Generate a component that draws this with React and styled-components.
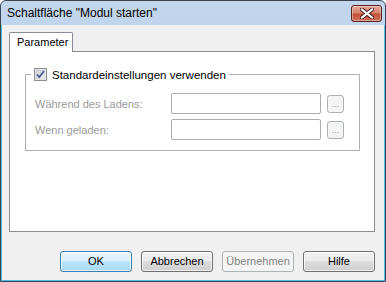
import styled, { createGlobalStyle } from 'styled-components';

const Global = createGlobalStyle`
  html, body { margin: 0; padding: 0; background: #ffffff; }
  * { box-sizing: border-box; }
`;

const Window = styled.div`
  width: 386px;
  height: 282px;
  display: flex;
  flex-direction: column;
  border: 1px solid #3a4654;
  border-radius: 6px 6px 0 0;
  background: linear-gradient(#c2d6ec, #b9d0ea 40%, #c5d9ee);
  font-family: "Liberation Sans", Arial, sans-serif;
  overflow: hidden;
`;

const TitleBar = styled.div`
  height: 24px;
  display: flex;
  align-items: flex-start;
  justify-content: space-between;
  padding: 0 3px 0 6px;
`;

const Title = styled.div`
  font-size: 12px;
  line-height: 24px;
  color: #000;
`;

const CloseButton = styled.div`
  width: 31px;
  height: 17px;
  margin-top: 4px;
  border: 1px solid #5a1f1f;
  border-radius: 3px;
  background: linear-gradient(#e9a99a, #d7826f 45%, #c4503a 55%, #d0735e);
  display: flex;
  align-items: center;
  justify-content: center;
  box-shadow: inset 0 0 0 1px rgba(255,255,255,0.35);
`;

const Client = styled.div`
  flex: 1;
  display: flex;
  flex-direction: column;
  background: #f0f0f0;
  border: 1px solid #4fbde9;
  border-top: none;
  padding: 7px 9px 8px 7px;
`;

const TabStrip = styled.div`
  display: flex;
  height: 19px;
  position: relative;
  z-index: 1;
`;

const Tab = styled.div`
  width: 64px;
  height: 20px;
  border: 1px solid #898c95;
  border-bottom: none;
  border-radius: 2px 2px 0 0;
  background: #ffffff;
  font-size: 11px;
  line-height: 18px;
  padding-left: 7px;
  color: #000;
`;

const TabPanel = styled.div`
  height: 181px;
  border: 1px solid #898c95;
  background: #ffffff;
  padding: 16px 14px 0 15px;
`;

const Group = styled.fieldset`
  margin: 0;
  border: 1px solid #b0b0b0;
  padding: 12px 14px 10px 9px;
  min-width: 0;
`;

const Legend = styled.legend`
  display: flex;
  align-items: center;
  gap: 5px;
  padding: 0 3px;
  margin-left: -4px;
  font-size: 11.5px;
  color: #000;
  height: 13px;
`;

const FieldGrid = styled.div`
  display: grid;
  grid-template-columns: 130px 150px 17px;
  column-gap: 6px;
  row-gap: 5px;
  align-items: center;
`;

const FieldLabel = styled.span`
  font-size: 11px;
  color: #9a9a9a;
`;

const Input = styled.div`
  height: 21px;
  border: 1px solid #acacac;
  border-radius: 2px;
  background: #ffffff;
`;

const BrowseButton = styled.div`
  height: 18px;
  border: 1px solid #adb2b5;
  border-radius: 3px;
  background: #f4f4f4;
  font-size: 9px;
  color: #a49a9a;
  text-align: center;
  line-height: 17px;
`;

const ButtonBar = styled.div`
  margin-top: auto;
  display: flex;
  justify-content: flex-end;
  gap: 9px;
`;

const Button = styled.div`
  width: 72px;
  height: 21px;
  border: 1px solid ${p => (p.$default ? '#3c7fb1' : p.$disabled ? '#adb2b5' : '#707070')};
  border-radius: 3px;
  background: ${p =>
    p.$default
      ? 'linear-gradient(#eaf6fd, #d9f0fc 45%, #bee6fd 50%, #a7d9f5)'
      : p.$disabled
      ? '#f4f4f4'
      : 'linear-gradient(#f2f2f2, #ebebeb 45%, #dddddd 50%, #cfcfcf)'};
  box-shadow: ${p => (p.$disabled ? 'none' : 'inset 0 0 0 1px rgba(255,255,255,0.7)')};
  font-size: 11px;
  color: ${p => (p.$disabled ? '#838383' : '#000')};
  text-align: center;
  line-height: 19px;
`;

function CloseIcon() {
  return (
    <svg width="14" height="11" viewBox="0 0 14 11">
      <path d="M2 1.5 L12 9.5 M12 1.5 L2 9.5" stroke="#3b1a1a" strokeWidth="4" strokeLinecap="square" />
      <path d="M2 1.5 L12 9.5 M12 1.5 L2 9.5" stroke="#ffffff" strokeWidth="2.2" strokeLinecap="square" />
    </svg>
  );
}

function CheckBox() {
  return (
    <svg width="13" height="13" viewBox="0 0 13 13">
      <defs>
        <linearGradient id="cbg" x1="0" y1="0" x2="1" y2="1">
          <stop offset="0" stopColor="#cbcfd5" />
          <stop offset="1" stopColor="#f6f6f6" />
        </linearGradient>
      </defs>
      <rect x="0.5" y="0.5" width="12" height="12" fill="#f4f4f4" stroke="#8e8f8f" />
      <rect x="2" y="2" width="9" height="9" fill="url(#cbg)" stroke="#aeb3b9" strokeWidth="0.5" />
      <path d="M3 6.5 L5.3 9 L10 3" fill="none" stroke="#4a5f97" strokeWidth="1.8" />
    </svg>
  );
}

export default function App() {
  return (
    <>
      <Global />
      <Window>
        <TitleBar>
          <Title>Schaltfläche "Modul starten"</Title>
          <CloseButton><CloseIcon /></CloseButton>
        </TitleBar>
        <Client>
          <TabStrip>
            <Tab>Parameter</Tab>
          </TabStrip>
          <TabPanel>
            <Group>
              <Legend><CheckBox />Standardeinstellungen verwenden</Legend>
              <FieldGrid>
                <FieldLabel>Während des Ladens:</FieldLabel>
                <Input />
                <BrowseButton>...</BrowseButton>
                <FieldLabel>Wenn geladen:</FieldLabel>
                <Input />
                <BrowseButton>...</BrowseButton>
              </FieldGrid>
            </Group>
          </TabPanel>
          <ButtonBar>
            <Button $default>OK</Button>
            <Button>Abbrechen</Button>
            <Button $disabled>Übernehmen</Button>
            <Button>Hilfe</Button>
          </ButtonBar>
        </Client>
      </Window>
    </>
  );
}
